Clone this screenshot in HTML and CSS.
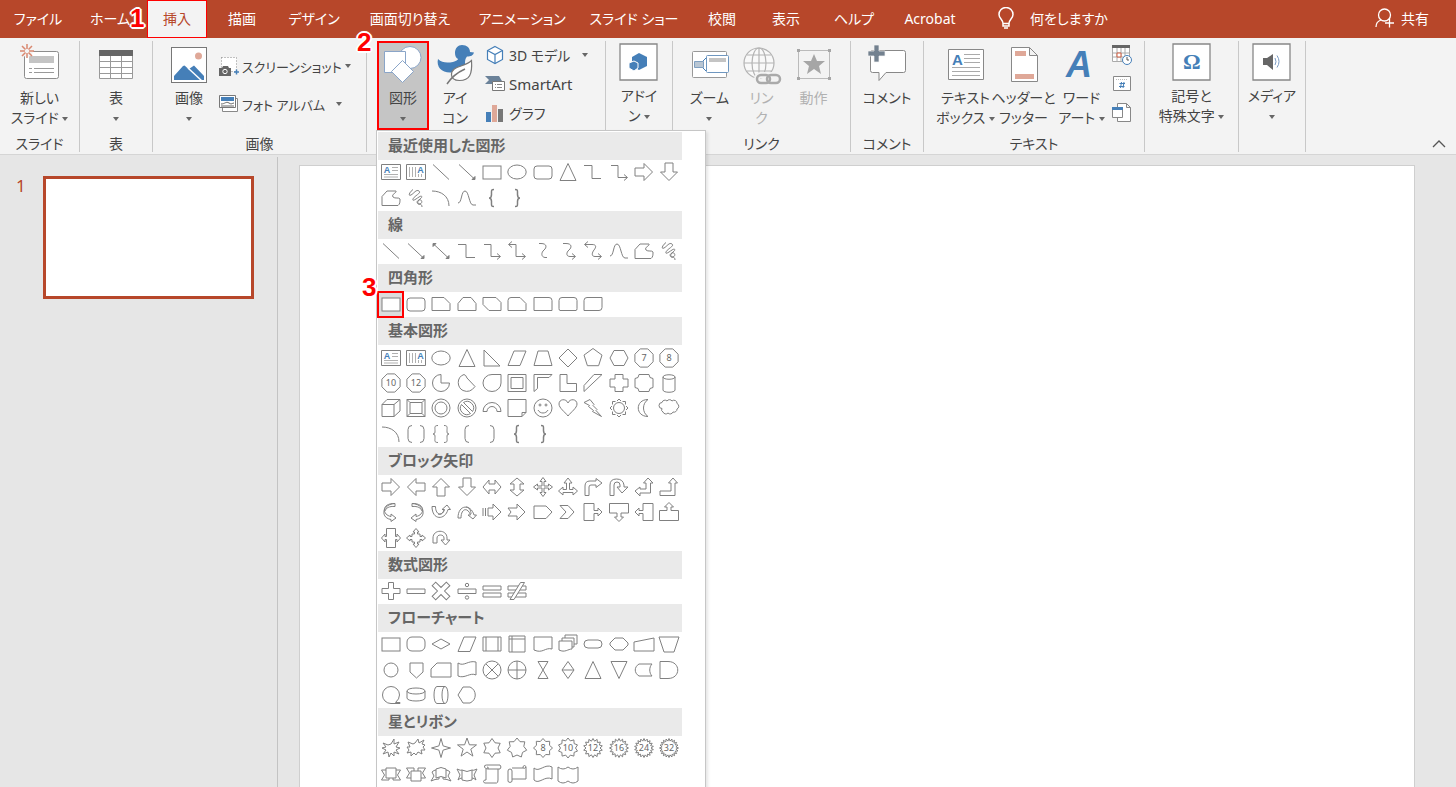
FILE: index.html
```html
<!DOCTYPE html>
<html lang="ja">
<head>
    <meta charset="UTF-8">
    <title>プレゼンテーション</title>
    <meta name="viewport" content="width=device-width, initial-scale=1.0">
    <link rel="stylesheet" href="styles.css">
</head>
<body>

<div class="app">
    <nav class="tabs">
        <button class="tab tab-m">ファイル</button>
        <button class="tab tab-m">ホーム</button>
        <button class="tab tab-s selected">挿入<span class="step step-1">1</span></button>
        <button class="tab tab-s">描画</button>
        <button class="tab tab-l">デザイン</button>
        <button class="tab tab-xl">画面切り替え</button>
        <button class="tab tab-xl">アニメーション</button>
        <button class="tab tab-xl">スライド ショー</button>
        <button class="tab tab-s">校閲</button>
        <button class="tab tab-s">表示</button>
        <button class="tab tab-m">ヘルプ</button>
        <button class="tab tab-l">Acrobat</button>
        <button class="tab tell-me">
            <svg width="16" height="22" viewBox="0 0 16 22" fill="none" stroke="#fff" stroke-width="1.5"><path d="M5 16.5c0-4-4-5-4-9a7 7 0 0 1 14 0c0 4-4 5-4 9zM5 16v3h6v-3M6 21h4"/></svg>
            何をしますか
        </button>
        <button class="tab share">
            <svg width="20" height="20" viewBox="0 0 20 20" fill="none" stroke="#fff" stroke-width="1.3"><circle cx="9.5" cy="7" r="6"/><path d="M1 19c0-4 2-6 5-7M10 15h9M14.5 10.5v9"/></svg>
            共有
        </button>
    </nav>

    <div class="ribbon">
        <!-- スライド -->
        <section class="group g-slide">
            <div class="items">
                <button class="big">
                    <svg class="icon" viewBox="0 0 40 42"><rect x="4.5" y="8.5" width="34" height="27" rx="2" fill="#fff" stroke="#8c8c8c"/><path fill="#c4c4c4" d="M9 13h25v7H9z"/><path stroke="#999" d="M9 25.5h3M14 25.5h20M9 29.5h3M14 29.5h20"/><circle cx="7" cy="8" r="6" fill="#f3f3f3"/><path stroke="#d98870" stroke-width="1.5" d="M7 1v5M7 10v5M0 8h5M9 8h5M2 3l3.5 3.5M8.5 9.5L12 13M12 3L8.5 6.5M5.5 9.5L2 13"/></svg>
                    <span>新しい<br>スライド <i class="caret"></i></span>
                </button>
            </div>
            <div class="group-label">スライド</div>
        </section>

        <!-- 表 -->
        <section class="group g-narrow">
            <div class="items">
                <button class="big">
                    <svg class="icon" viewBox="0 0 40 42"><path fill="#fff" stroke="#999" d="M3.5 8.5h33v27h-33zM14.5 8v27M25.5 8v27M3 18.5h33M3 24.5h33M3 30.5h33"/><path fill="#666" d="M3 7h34v6H3z"/></svg>
                    <span>表<br><i class="caret"></i></span>
                </button>
            </div>
            <div class="group-label">表</div>
        </section>

        <!-- 画像 -->
        <section class="group g-images">
            <div class="items start">
                <button class="big">
                    <svg class="icon" viewBox="0 0 40 42"><rect x="2.5" y="4.5" width="35" height="35" fill="#fff" stroke="#777"/><circle cx="29.5" cy="13" r="3.5" fill="#dfa898"/><path fill="#457fb8" d="M5 37v-4l9-10 1.5-.5L24 30l-4-4 5-3.5L35 33v4z"/><path stroke="#fff" stroke-width="1.5" d="M19 25l14 13"/></svg>
                    <span>画像<br><i class="caret"></i></span>
                </button>
                <div class="small-list two">
                    <button class="small">
                        <svg width="20" height="20" viewBox="0 0 20 20"><path fill="#fff" stroke="#888" stroke-dasharray="1 2" d="M2.5 1.5h15v14h-15z"/><path fill="#666" d="M0 12h3l1-2h5l1 2h2v8H0z"/><circle cx="6" cy="15.5" r="2.2" fill="#666" stroke="#fff"/><path stroke="#457fb8" stroke-width="1.5" d="M15 16h5M17.5 13.5v5"/></svg>
                        スクリーンショット <i class="caret"></i>
                    </button>
                    <button class="small">
                        <svg width="20" height="18" viewBox="0 0 20 18"><path fill="#fff" stroke="#888" d="M3.5 3.5h15v13h-15z"/><path fill="#fff" stroke="#777" d="M.5.5h16v12H.5z"/><path fill="#457fb8" d="M2 2h13v4H2z"/><path fill="none" stroke="#666" d="M2 9c4 0 5-3 8-1s3 0 5 0M2 11h13"/></svg>
                        フォト アルバム <i class="caret wide"></i>
                    </button>
                </div>
            </div>
            <div class="group-label">画像</div>
        </section>

        <!-- 図 -->
        <section class="group g-illust">
            <div class="items start">
                <div class="menu-wrap">
                    <button class="big pressed">
                        <svg class="icon" viewBox="0 0 40 42" fill="#fff" stroke="#8aa5c8"><circle cx="27" cy="14.5" r="11"/><path d="M1.5 8.5h21v21h-21z"/><path d="M19.5 17.5l11 11-11 11-11-11z"/></svg>
                        <span>図形<br><i class="caret"></i></span>
                    </button>
                    <span class="step step-2">2</span>
                    <div class="shape-menu" id="shapeMenu"></div>
                </div>
                <button class="big">
                    <svg class="icon" viewBox="0 0 40 42"><path fill="#457fb8" d="M20 10c0-5 3-8 7-8 5 0 8 3 8 7l4 .5c-1 3-3 4-7 4-2 2-2 5-2 7 0 5-5 9-14 9C7 30 1 24 3 16c4 4 9 4 15 3 3-1 5-2 5-3-2-1-3-3-3-6z"/><path fill="#fff" stroke="#777" stroke-width="1.2" d="M36.5 17.5c1 14-2 20-12 20-5 0-8-2-8-6 0-9 13-7 20-14z"/><path fill="none" stroke="#777" stroke-width="1.5" d="M12 41c4-6 9-11 18-15"/></svg>
                    <span>アイ<br>コン</span>
                </button>
                <div class="small-list">
                    <button class="small">
                        <svg width="20" height="20" viewBox="0 0 20 20" fill="#fff" stroke="#457fb8" stroke-width="1.2"><path d="M10 1.5l7.5 4v9L10 18.5l-7.5-4v-9z"/><path d="M2.5 5.5l7.5 4 7.5-4M10 9.5v9" fill="none"/></svg>
                        3D モデル <i class="caret wide"></i>
                    </button>
                    <button class="small latin">
                        <svg width="20" height="20" viewBox="0 0 20 20"><path fill="#6b8299" d="M0 2h14l3 5h-4v3H0l4-4z"/><path fill="#fff" stroke="#777" d="M7.5 7.5h12v9h-12z"/><path stroke="#888" d="M10 10.5h1M12 10.5h5M10 13.5h1M12 13.5h5"/></svg>
                        SmartArt
                    </button>
                    <button class="small">
                        <svg width="20" height="20" viewBox="0 0 20 20"><path fill="#457fb8" d="M1 9h5v10H1z"/><path fill="#dfa898" d="M7 2h5v17H7z"/><path fill="#777" d="M13 6h5v13h-5z"/></svg>
                        グラフ
                    </button>
                </div>
            </div>
        </section>

        <!-- アドイン -->
        <section class="group g-addin">
            <div class="items">
                <button class="big framed">
                    <svg class="icon" viewBox="0 0 40 42"><path fill="#fff" stroke="#888" stroke-width="1.3" d="M1 1h37v36H1z"/><path fill="#457fb8" d="M20 10l8 4v9l-8 4-7-4v-9z"/><path fill="#457fb8" stroke="#fff" d="M15 18l4 2v5l-4 3-5-3v-5z"/></svg>
                    <span>アドイ<br>ン <i class="caret"></i></span>
                </button>
            </div>
        </section>

        <!-- リンク -->
        <section class="group g-link">
            <div class="items">
                <button class="big">
                    <svg class="icon" viewBox="0 0 40 42"><rect x="2.5" y="8.5" width="34" height="26" rx="1" fill="#fff" stroke="#999"/><path fill="#b9c6d3" stroke="#7f9fc0" d="M4.5 18.5h9v6h-9z"/><path stroke="#457fb8" d="M13 18l3-3M13 25l3 3"/><rect x="16.5" y="12.5" width="22" height="17" rx="1" fill="#fff" stroke="#6f97c0"/><path fill="#c4c4c4" d="M19 15h17v4H19z"/></svg>
                    <span>ズーム<br><i class="caret"></i></span>
                </button>
                <button class="big" disabled>
                    <svg class="icon" viewBox="0 0 40 42" fill="none" stroke="#b3b3b3" stroke-width="1.2"><circle cx="17" cy="20" r="15" fill="#f9f9f9"/><ellipse cx="17" cy="20" rx="7" ry="15"/><path d="M17 5v30M2 20h30M5 12h24M5 28h24"/><g stroke="#f3f3f3" stroke-width="6"><rect x="15" y="32" width="13" height="8" rx="4"/><rect x="25" y="32" width="13" height="8" rx="4"/></g><g stroke="#aaa" stroke-width="2.5"><rect x="15" y="32" width="13" height="8" rx="4"/><rect x="25" y="32" width="13" height="8" rx="4"/></g></svg>
                    <span>リン<br>ク</span>
                </button>
                <button class="big" disabled>
                    <svg class="icon" viewBox="0 0 40 42"><path fill="none" stroke="#bbb" d="M4.5 7.5h31v28h-31z"/><path fill="#a6a6a6" d="M3 6h3v3H3zM34 6h3v3h-3zM3 34h3v3H3zM34 34h3v3h-3zM20 11l3 7h8l-6 5 2 8-7-5-7 5 2-8-6-5h8z"/></svg>
                    <span>動作</span>
                </button>
            </div>
            <div class="group-label">リンク</div>
        </section>

        <!-- コメント -->
        <section class="group g-narrow">
            <div class="items">
                <button class="big">
                    <svg class="icon" viewBox="0 0 40 42"><path fill="#fff" stroke="#888" d="M5.5 7.5h31q2 0 2 2v18q0 2-2 2H19l-7 8v-8H5.5q-2 0-2-2v-18q0-2 2-2z"/><path fill="#73818f" stroke="#f3f3f3" stroke-width=".7" d="M7 2h5v6h6v5h-6v6H7v-6H1V8h6z"/></svg>
                    <span>コメント</span>
                </button>
            </div>
            <div class="group-label">コメント</div>
        </section>

        <!-- テキスト -->
        <section class="group g-text">
            <div class="items">
                <button class="big wide">
                    <svg class="icon" viewBox="0 0 40 42"><path fill="#fff" stroke="#888" d="M2.5 6.5h35v30h-35z"/><path stroke="#aaa" d="M18 11.5h16M18 15.5h16M18 19.5h16M6 24.5h28M6 28.5h28M6 32.5h28"/><text class="glyph" x="6" y="22" font-size="15">A</text></svg>
                    <span>テキスト<br>ボックス <i class="caret"></i></span>
                </button>
                <button class="big wide">
                    <svg class="icon" viewBox="0 0 40 42"><path fill="#fff" stroke="#888" d="M7.5 4.5h18l8 8v26h-26zM25.5 4.5v8h8"/><path fill="#dfa898" d="M11 8h11v5H11zM11 31h19v5H11z"/></svg>
                    <span>ヘッダーと<br>フッター</span>
                </button>
                <button class="big wide">
                    <svg class="icon" viewBox="0 0 40 42"><text class="glyph slanted" x="4" y="34" font-size="36">A</text></svg>
                    <span>ワード<br>アート <i class="caret"></i></span>
                </button>
                <div class="small-list tight">
                    <button class="small" aria-label="日付と時刻">
                        <svg width="20" height="20" viewBox="0 0 20 20"><path fill="#fff" stroke="#aaa" d="M.5 2.5h17v14H.5zM5 2v14M9 2v14M13 2v14M1 8h16M1 12h16"/><path fill="#666" d="M0 0h18v3H0z"/><path fill="#fff" stroke="#cf5d40" d="M5 8h4v4H5z"/><circle cx="15" cy="15" r="4.5" fill="#fff" stroke="#457fb8"/><path fill="none" stroke="#555" d="M15 12v3h2"/></svg>
                    </button>
                    <button class="small" aria-label="スライド番号">
                        <svg width="20" height="20" viewBox="0 0 20 20"><path fill="#fff" stroke="#888" d="M1.5 2.5h17v14h-17z"/><path stroke="#bbb" stroke-dasharray="1 1" d="M4 5.5h12"/><path stroke="#457fb8" d="M9.5 8L8.5 14M12 8l-1 6M7.5 9.5h5.5M7 12.5h5.5"/></svg>
                    </button>
                    <button class="small" aria-label="オブジェクト">
                        <svg width="20" height="20" viewBox="0 0 20 20"><path fill="#fff" stroke="#888" d="M5.5.5h9l4 4v14h-13zM14.5.5v4h4"/><path fill="#fff" stroke="#888" d="M.5 5.5h10v9H.5z"/><path fill="#457fb8" d="M0 4h11v3H0z"/></svg>
                    </button>
                </div>
            </div>
            <div class="group-label">テキスト</div>
        </section>

        <!-- 記号と特殊文字 -->
        <section class="group g-symbol">
            <div class="items">
                <button class="big framed">
                    <svg class="icon" viewBox="0 0 40 42"><path fill="#fff" stroke="#888" stroke-width="1.3" d="M1 1h37v36H1z"/><text class="glyph serif" x="11" y="26" font-size="22">Ω</text></svg>
                    <span>記号と<br>特殊文字 <i class="caret"></i></span>
                </button>
            </div>
        </section>

        <!-- メディア -->
        <section class="group g-addin">
            <div class="items">
                <button class="big framed">
                    <svg class="icon" viewBox="0 0 40 42"><path fill="#fff" stroke="#888" stroke-width="1.3" d="M1 1h37v36H1z"/><path fill="#666" d="M11 15h4l6-4v16l-6-5h-4z"/><path fill="none" stroke="#7c9cc4" d="M23 15q2 4 0 7M25 12.5q4 6 0 12"/></svg>
                    <span>メディア<br><i class="caret"></i></span>
                </button>
            </div>
        </section>

        <button class="collapse" aria-label="リボンを折りたたむ">
            <svg width="14" height="8" viewBox="0 0 14 8" fill="none" stroke="#555" stroke-width="1.3"><path d="M1 7l6-6 6 6"/></svg>
        </button>
    </div>

    <main class="workspace">
        <aside class="thumbs">
            <span class="thumb-no">1</span>
            <div class="thumb"></div>
        </aside>
        <div class="slide"></div>
    </main>
</div>

<script src="shapes.js"></script>
</body>
</html>
```

FILE: styles.css
```css
* {
    box-sizing: border-box;
}
body {
    margin: 0;
    font-family: "Noto Sans", "Noto Sans CJK JP", sans-serif;
    font-feature-settings: "palt";
    font-size: 14px;
    color: #444;
    background: #e6e6e6;
}
button {
    margin: 0;
    padding: 0;
    border: none;
    background: none;
    font: inherit;
    font-feature-settings: inherit;
    color: inherit;
    white-space: nowrap;
}
.app {
    height: 100vh;
    display: flex;
    flex-direction: column;
    overflow: hidden;
}

/* tabs */
.tabs {
    display: flex;
    height: 38px;
    padding-left: 2px;
    background: #b7472a;
    color: #fff;
}
.tab {
    position: relative;
    padding-bottom: 2px;
}
.tab-s { width: 64px; }
.tab-m { width: 72px; }
.tab-l { width: 80px; }
.tab-xl { width: 112px; }
.tab.selected {
    width: 60px;
    margin: 0 3px 0 1px;
    background: #f3f3f3;
    color: #b7472a;
    border: 1px solid #f00;
}
.tell-me, .share {
    display: flex;
    align-items: center;
    gap: 16px;
    padding-left: 28px;
}
.share {
    gap: 6px;
    margin-left: auto;
    padding-right: 27px;
}

/* numbered steps */
.step {
    position: absolute;
    z-index: 5;
    color: #f00;
    font: bold 26px/26px "Liberation Sans", sans-serif;
    text-shadow: 2px 0 #fff, -2px 0 #fff, 0 2px #fff, 0 -2px #fff, 1px 1px #fff, -1px -1px #fff, 1px -1px #fff, -1px 1px #fff, 0 0 3px #fff;
}
.step-1 { left: -18px; top: 4px; }
.step-2 { left: -20px; top: -12px; }
.step-3 { left: -16px; top: -18px; }

/* ribbon */
.ribbon {
    display: flex;
    height: 117px;
    padding: 3px 0 2px;
    background: #f3f3f3;
    border-bottom: 1px solid #d5d5d5;
}
.group {
    display: flex;
    flex-direction: column;
    flex-shrink: 0;
    border-right: 1px solid #c8c8c8;
}
.g-slide { width: 80px; }
.g-narrow { width: 73px; }
.g-images { width: 214px; }
.g-illust { width: 239px; }
.g-addin { width: 67px; }
.g-link { width: 178px; }
.g-text { width: 221px; }
.g-symbol { width: 94px; }
.items {
    flex: 1;
    display: flex;
    justify-content: center;
}
.items.start {
    justify-content: flex-start;
    padding-left: 10px;
}
.group-label {
    height: 16px;
    line-height: 16px;
    text-align: center;
}
.big {
    display: flex;
    flex-direction: column;
    align-items: center;
    width: 52px;
    height: 89px;
    padding-top: 2px;
    line-height: 20px;
}
.big.wide {
    width: 58px;
}
.big:disabled {
    color: #b1b1b1;
}
.big.pressed {
    background: #c5c5c5;
    outline: 2px solid #f00;
    outline-offset: -2px;
}
.icon {
    flex-shrink: 0;
    width: 40px;
    height: 42px;
    margin-bottom: 3px;
}
.framed .icon {
    margin-bottom: 1px;
}
.caret {
    display: inline-block;
    vertical-align: middle;
    border: 3px solid transparent;
    border-top: 4px solid #666;
    border-bottom: none;
}
.caret.wide {
    margin-left: 8px;
}
.glyph {
    fill: #457fb8;
    font-family: "Liberation Sans", sans-serif;
    font-weight: bold;
}
.slanted { font-style: italic; }
.serif { font-family: "Liberation Serif", serif; }
.small-list {
    display: flex;
    flex-direction: column;
    padding-left: 4px;
}
.small-list.tight {
    padding-left: 1px;
}
.small-list.two {
    padding: 7px 0 0 4px;
    font-size: 13px;
}
.small {
    display: flex;
    align-items: center;
    gap: 4px;
    height: 29px;
    padding-bottom: 2px;
}
.small.latin {
    font-size: 15px;
}
.two .small {
    gap: 3px;
    height: 38px;
}
.collapse {
    align-self: flex-end;
    margin-left: auto;
    padding-right: 10px;
}

/* shapes menu */
.menu-wrap {
    position: relative;
}
.shape-menu {
    position: absolute;
    z-index: 4;
    top: 89px;
    left: -1px;
    width: 330px;
    padding: 1px 23px 40px 1px;
    background: #fff;
    border: 1px solid #c6c6c6;
    box-shadow: 2px 2px 3px rgba(0, 0, 0, 0.1);
}
.shape-menu h3 {
    height: 28px;
    margin: 0;
    padding-left: 10px;
    background: #eaeaea;
    color: #666;
    font-size: 15px;
    line-height: 26px;
}
.shape-grid {
    display: grid;
    grid-template-columns: repeat(12, 1fr);
}
.shape {
    position: relative;
    display: flex;
    align-items: center;
    justify-content: center;
    aspect-ratio: 1;
    padding-bottom: 1px;
}
.shape svg {
    width: 20px;
    height: 20px;
    fill: none;
    stroke: #808080;
    overflow: visible;
}
.shape text {
    fill: #666;
    stroke: none;
    font-size: 9px;
    text-anchor: middle;
}
.shape .mark {
    fill: #457fb8;
    font-family: "Liberation Sans", sans-serif;
    font-weight: bold;
}
.shape .solid {
    fill: #808080;
}
.shape .pale {
    stroke: #b0b0b0;
}
.shape.active {
    background: #dcdcdc;
    outline: 2px solid #f00;
    outline-offset: -1px;
}
.shape.active rect {
    fill: #fff;
}

/* workspace */
.workspace {
    flex: 1;
    display: flex;
    padding-top: 2px;
}
.thumbs {
    display: flex;
    align-items: flex-start;
    gap: 17px;
    width: 278px;
    padding: 19px 23px 0 16px;
    border-right: 1px solid #c3c3c3;
}
.thumb-no {
    color: #b7472a;
    font-size: 17px;
    line-height: 20px;
}
.thumb {
    flex: 1;
    aspect-ratio: 12 / 7;
    background: #fff;
    border: 3px solid #b7472a;
}
.slide {
    flex: 1;
    margin: 8px 41px 0 21px;
    background: #fff;
    border: 1px solid #cfcfcf;
    border-bottom: none;
}
```

FILE: shapes.js
```javascript
const p = d => `<path d="${d}"/>`;
const turn = (deg, s) => `<g transform="rotate(${deg} 10 10)">${s}</g>`;
const flip = s => `<g transform="matrix(-1 0 0 1 20 0)">${s}</g>`;
const label = t => `<text x="10" y="13">${t}</text>`;

// closed polygon with n corners, every second one pulled in to r when given
function star(n, R, r, start = -90) {
    const pts = [];
    const count = r ? n * 2 : n;
    for (let i = 0; i < count; i++) {
        const a = (start + i * 360 / count) * Math.PI / 180;
        const d = r && i % 2 ? r : R;
        pts.push((10 + d * Math.cos(a)).toFixed(1) + ',' + (10 + d * Math.sin(a)).toFixed(1));
    }
    return `<polygon points="${pts.join(' ')}"/>`;
}

const rightArrow = p('M1 6h9V1.5l8.5 8.5-8.5 8.5V14H1z');
const circle = (r, x = 10, y = 10) => `<circle cx="${x}" cy="${y}" r="${r}"/>`;
const elbow = 'M2 3.5h7v12h9';
const head = p('M15 12.5l3.5 3-3.5 3');
const tail = p('M5 .5l-3.5 3L5 6.5');
const braceL = 'M12 1.5c-3 0-2.5 1-2.5 5 0 2-.5 3.5-2.5 3.5 2 0 2.5 1.5 2.5 3.5 0 4-.5 5 2.5 5';
const brace = `<path stroke-width="1.5" d="${braceL}"/>`;
const octagon = star(8, 9.8, 0, 22.5);
const leftRight = p('M1 10l6-7v4h6V3l6 7-6 7v-4H7v4z');
const callout = p('M1 1.5h10v7h4V6l4 4-4 4v-2.5h-4v7H1z');
const curveRight = p('M14 1.5C0 1 1 13 10 14.5V12l5 4-5 3.5v-2C-1 16 1 2 14 1.5zv3C8 4 5 6 4 9');

const shapes = {
    textbox: p('M.5 2.5h19v15H.5z') + '<path class="pale" d="M11 5.5h6M11 8.5h6M3 12.5h14M3 15h14"/><text class="mark" x="6" y="11">A</text>',
    vtextbox: p('M.5 2.5h19v15H.5z') + '<path class="pale" d="M3.5 5v10M6.5 5v10M9.5 5v10M12.5 12v3M15.5 12v3"/><text class="mark" x="14.5" y="11">A</text>',
    line: p('M2 2.5l16 15'),
    lineArrow: p('M2 2.5l16 15') + '<path class="solid" d="M18 17.5v-3l-3 3z"/>',
    lineArrow2: p('M2 2.5l16 15') + '<path class="solid" d="M18 17.5v-3l-3 3zM2 2.5v3l3-3z"/>',
    rect: '<rect x="1" y="4" width="18" height="13"/>',
    ellipse: '<ellipse cx="10" cy="10" rx="9.2" ry="7"/>',
    roundRect: '<rect x="1" y="4" width="18" height="13" rx="3"/>',
    triangle: p('M10 1.5L18 18.5H2z'),
    elbow: p('M1 3.5h8v13h9'),
    elbowArrow: p(elbow) + head,
    elbowArrow2: p(elbow) + head + tail,
    right: rightArrow,
    down: turn(90, rightArrow),
    left: turn(180, rightArrow),
    up: turn(270, rightArrow),
    freeform: p('M1 17.5V8.5l5-5.5h9c1 2-5 3-3 6 2 2 6 0 7 2 0 3 0 5-2 6.5z'),
    scribble: p('M7 1.5c-4 3-5 7-2 5.5s5-6 8-4-5 5-6 8 3 0 6-2 4 0 1 2-3 6 0 5 2-5-1-4-2 4 0 4 3 1 3 3'),
    arc: p('M1 3c9 0 17 5 17 15'),
    curve: p('M1 15C5 15 4 3 8 3s4 14 8 14h3'),
    braceL: brace,
    braceR: flip(brace),
    sCurve: p('M6 2.5h2c6 0 6 4 3 6.5s-3 7 1 7.5h2'),
    sArrow: p('M5 2.5h3c6 0 6 4 3 6.5s-3 6.500 1 6.500h5') + p('M14 12.5l3.5 3-3.5 3'),
    sArrow2: p('M2 3.5h7c5 0 4 3 2 5.5s-3 6.500 1 6.500h6') + head + tail,
    snip1: p('M1 3.5h12l6 6v7H1z'),
    snip2: p('M1 16.5v-7l5-6h8l5 6v7z'),
    snipDiag: p('M1 3.5h13l5 5v8H7l-6-6z'),
    snipRound: p('M1 16.5v-10q0-3 3-3h9l6 6v7z'),
    round1: p('M1 3.5h15q3 0 3 3v10H1z'),
    round2: p('M1 14.5v-8q0-3 3-3h12q3 0 3 3v8q0 2-1 2H2q-1 0-1-2z'),
    roundDiag: p('M4 3.5h15v10q0 3-3 3H1v-10q0-3 3-3z'),

    rightTriangle: p('M2 2v16h16z'),
    parallelogram: p('M1 17.5L7 3h12l-6 14.5z'),
    trapezoid: p('M1 17.5L5 3h10l4 14.5z'),
    diamond: p('M10 1l9 9-9 9-9-9z'),
    pentagon: star(5, 9.5),
    hexagon: p('M1 10l4-7.5h10l4 7.5-4 7.5H5z'),
    n7: octagon + label('7'),
    n8: octagon + label('8'),
    n10: octagon + label('10'),
    n12: octagon + label('12'),
    pie: p('M10 1.5a8.5 8.5 0 1 0 8.5 8.5H10z'),
    chord: p('M7 1.5C-1 4 0 15 6 17.500q7 3 12-4L10 5Q9 2 7 1.500z'),
    teardrop: p('M10 1.5h9V10a9 8.5 0 1 1-9-8.5z'),
    frame: p('M1 1.5h18v17H1zM4 4.5h12v11H4z'),
    halfFrame: p('M1 1.5h18l-3 3H4.5v11L1 18.5z'),
    lShape: p('M2 1.5h7v9h9.5v8H2z'),
    stripe: p('M1 18.5v-6L11 1.5h8z'),
    cross: p('M6 1.5h8V6h5v8h-5v4.5H6V14H1V6h5z'),
    plaque: p('M5 1.5h10q0 4 4 4v9q-4 0-4 4H5q0-4-4-4v-9q4 0 4-4z'),
    can: p('M4 4c0-3 12-3 12 0v13c0 3-12 3-12 0zM4 4c0 3 12 3 12 0'),
    cube: p('M1 6.5h12v12H1zM1 6.5l5-5h13l-6 5M19 1.5V13l-6 5.5'),
    bevel: p('M1 1.5h18v17H1zM4 4.5h12v11H4zM1 1.5l3 3M19 1.5l-3 3M1 18.5l3-3M19 18.5l-3-3'),
    donut: circle(9) + circle(6),
    noSign: circle(9) + p('M4.5 6.5a6.5 6.5 0 0 0 9 9zM6.5 4.5a6.5 6.5 0 0 1 9 9z'),
    blockArc: p('M1 13.5a9 9 0 0 1 18 0h-4a5 5 0 0 0-10 0z'),
    fold: p('M1 1.5h18v13l-4 4H1zM19 14.5h-4v4'),
    smiley: circle(9) + circle(1, 7, 7) + circle(1, 13, 7) + p('M5 12c2 4 8 4 10 0'),
    heart: p('M10 18C7 14 1 10 1 6c0-5 7-6 9-1 2-5 9-4 9 1 0 4-6 8-9 12z'),
    bolt: p('M1 4.5l6-3 4 5-1 1 4 4-1 1 5.5 6-9-5 1-1-5-4 1-1z'),
    sun: circle(5.5) + p('M8 3l2-2 2 2M8 17l2 2 2-2M3 8l-2 2 2 2M17 8l2 2-2 2M3.5 6.5v-3h3M13.5 3.5h3v3M3.5 13.5v3h3M13.5 16.5h3v-3'),
    moon: p('M14 1.5c-13 0-13 17 0 17-6-4-6-13 0-17z'),
    cloud: p('M3 10.500a3 3 0 0 1 0-6 3 3 0 0 1 5-1.500 3 3 0 0 1 5 0 3 3 0 0 1 5 2.500 3 3 0 0 1 0 5.500 3 3 0 0 1-4 3 3 3 0 0 1-5 1 3 3 0 0 1-5-1 2.500 2.500 0 0 1-1-3.500z'),
    bracketPair: p('M6 1.5q-4 0-4 4v9q0 4 4 4M14 1.5q4 0 4 4v9q0 4-4 4'),
    bracePair: p('M7 1.5c-4 0-3 2-3 5 0 2 0 3.5-2 3.5 2 0 2 1.5 2 3.5 0 3-1 5 3 5M13 1.5c4 0 3 2 3 5 0 2 0 3.5 2 3.5-2 0-2 1.5-2 3.5 0 3 1 5-3 5'),
    bracketL: p('M12 1.5q-4 0-4 4v9q0 4 4 4'),
    bracketR: p('M8 1.5q4 0 4 4v9q0 4-4 4'),

    leftRight: leftRight,
    upDown: turn(90, leftRight),
    quad: p('M10 .5l3 4h-2V9h4.500V7l4 3-4 3v-2H11v4.500h2l-3 4-3-4h2V11H4.500v2l-4-3 4-3v2H9V4.500H7z'),
    triArrow: p('M10 1l4 5h-2.5v6.5H15V10l4.5 4-4.5 4v-2.5H5V18L.5 14 5 10v2.5h3.5V6H6z'),
    bent: p('M2 18.5V9q0-5 5-5h6V1.5L19 6l-6 4.5V8H8Q6 8 6 10v8.5z'),
    uTurn: p('M1 18.5V8q0-6 6.5-6T15 8v2h4l-6 6-5-6h3V8q0-3-3-3T5 8v10.5z'),
    leftUp: p('M1 14l5-4v2h6V6H9.5L14 1l5 5h-2.5v10H6v3z'),
    bentUp: p('M1 14h11V6H9.5L14 1l4.5 5H16v12.5H1z'),
    curveRight: curveRight,
    curveLeft: flip(curveRight),
    curveUp: p('M1 4.5c0 14 13 14 16 3h2.5L16 3l-5 4.5h2.5c-2 7-9 6-9-3zM7 12c3 1 5-1 6-4'),
    curveDown: p('M1 16c0-14 13-14 16-3h2.5L16 17l-5-4h2.5C11 5 4 6 4 16zM9 5c3 0 5 3 5 7'),
    striped: p('M1 6v8M3.5 6v8M6 6h5V2l8 8-8 8v-4H6z'),
    notched: p('M1 6h9V2l8 8-8 8v-4H1l3-4z'),
    pentArrow: p('M1 4h12l6 6-6 6.5H1z'),
    chevron: p('M2 3.5h8l6 6.5-6 6.5H2L8 10z'),
    callRight: callout,
    callDown: p('M.5 1.500h19v9.500H12v4h2.500L10 19.500 5.500 15H8v-4H.5z'),
    callLeft: turn(180, callout),
    callUp: p('M.5 18.5v-10H8V5H5.5L10 .5 14.5 5H12v3.5h7.5v10z'),
    callLR: p('M5.5 .5h9v8H16V6l3.5 4-3.5 4v-2.5h-1.5v8h-9v-8H4V14L.5 10 4 6v2.5h1.5z'),
    callQuad: p('M10 .5l3 3.5h-1.5v2H14v2.5h2V7l3.5 3-3.5 3v-1.5h-2V14h-2.5v2H13l-3 3.5L7 16h1.5v-2H6v-2.5H4V13L.5 10 4 7v1.5h2V6h2.5V4H7z'),
    circular: p('M2 15v-5c0-9 14-9 14 0v2h3l-4.5 5-4.5-5h3v-2c0-4-7-4-7 0v5z'),

    plus: p('M7.5 1.5h5v6h6.5v5h-6.5v6h-5v-6H1v-5h6.5z'),
    minus: p('M1 8h18v4.5H1z'),
    times: turn(45, p('M7.5 0h5v7.5H20v5h-7.5V20h-5v-7.5H0v-5h7.5z')),
    divide: p('M1 8h18v4.5H1z') + circle(1.7, 10, 4) + circle(1.7, 10, 16.5),
    equal: p('M1 5h18v4H1zM1 12h18v4H1z'),
    notEqual: p('M1 5h18v4H1zM1 12h18v4H1z') + '<path fill="#fff" d="M3 18.5L13.5 1.5h4L7 18.5z"/>',

    fAlt: '<rect x="1" y="3" width="18" height="14" rx="5"/>',
    decision: p('M1 10l9-5 9 5-9 5z'),
    predefined: p('M1 3h18v14H1zM4 3v14M16 3v14'),
    internal: p('M2 2h16v16H2zM5 2v16M2 5h16'),
    doc: p('M1 3h18v12c-7-2-9 5-18 1z'),
    multiDoc: p('M1 7h13v8c-4 0-7 4-13 1zM4 7V4h12v9h-2M7 4V1h12v9h-3'),
    terminator: '<rect x="1" y="6" width="18" height="8" rx="4"/>',
    prep: p('M6 4h8l5 5v2l-5 5H6l-5-5V9z'),
    manualIn: p('M0 8l20-4v13H0z'),
    manualOp: p('M0 3h20l-5 15H5z'),
    connector: circle(7),
    offpage: p('M4 3h13v9l-6.5 6L4 12z'),
    card: p('M6 3h14v14H0V9z'),
    tape: p('M1 3c6 4 10-3 18-1v13c-6-3-11 4-18 1z'),
    sumJunction: circle(9) + p('M4 4l12 12M16 4L4 16'),
    or: circle(9) + p('M10 1v18M1 10h18'),
    collate: p('M5 1.5h10l-10 17h10z'),
    sort: p('M10 1.5l6 8.5-6 8.5L4 10zM4 10h12'),
    merge: p('M2 1.5h16l-8 17z'),
    stored: p('M5 4h13c-3 3-3 9 0 12H5C0 13 0 7 5 4z'),
    delay: p('M1 1.5h8c13 0 13 17 0 17H1z'),
    sequential: p('M19 18.5h-9a8.5 8.5 0 1 1 8.5-8.5q0 4-4 7.500H19z'),
    disk: p('M1 6c0-4 18-4 18 0v7c0 4-18 4-18 0zM1 6c0 4 18 4 18 0'),
    direct: p('M6 1.5h8c4 0 4 17 0 17H6c-4 0-4-17 0-17zM14 1.5c-4 0-4 17 0 17'),
    display: p('M1 10l5-8h7c7 3 7 13 0 16H6z'),

    burst1: p('M10 6l3-5 0 5 5-2-3 5 4 1-4 2 3 4-5-2 0 4-3-3-2 4-1-5-5 2 3-4-4-2 4-1-3-4 5 2z'),
    burst2: p('M9 5l3-4 1 4 5-3-2 4 3 1-2 2 2 3-4 0 1 4-4-2-2 3-2-2-3 3 0-4-4 1 2-3-2-3 3 0-2-5 5 2z'),
    star4: star(4, 9.5, 3),
    star5: star(5, 10, 4),
    star6: star(6, 9.5, 6),
    star7: star(7, 10, 7),
    s8: star(8, 9.5, 7) + label('8'),
    s10: star(10, 10, 7.5) + label('10'),
    s12: star(14, 9.5, 7) + label('12'),
    s16: star(16, 9.5, 7) + label('16'),
    s24: star(18, 9.5, 7) + label('24'),
    s32: star(20, 9.5, 7) + label('32'),
    ribbonUp: p('M5 4h10v10H5zM5 6H.5l3 5-3 5H8v-2M15 6h4.5l-3 5 3 5H12v-2'),
    ribbonDown: p('M5 7h10v10H5zM5 14H.5l3-5-3-5H8v3M15 14h4.5l-3-5 3-5H12v3'),
    curveRibbonUp: p('M5 5q5-3 10 0v9q-5-3-10 0zM5 6q-2 0-4 2l2 4-3 5q4-2 8-2v-2M15 6q2 0 4 2l-2 4 3 5q-4-2-8-2v-2'),
    curveRibbonDown: p('M5 6q5 3 10 0v10q-5 2-10 0zM5 14q-2 0-4 2l2-5-3-6q4 2 5 1M15 14q2 0 4 2l-2-5 3-6q-4 2-5 1'),
    vScroll: p('M4 5v11H2.5q-2 1.5 0 3h12q1.5 0 1.5-3V5h2q2-2 0-4H4.5Q2 1 2.5 3T6 5h10M6 5q1-2-1-2'),
    hScroll: p('M5 4h11V2.5q1.5-2 3 0V15H5v2.5q-2 2-4 0V7q0-2 2-2t2 2v8M16 4q2 1 3-1'),
    wave: p('M1 4c5 5 11-5 18-1v12c-7-4-13 6-18 1z'),
    doubleWave: p('M0 3q5 4 10 0 5 4 10 0v14q-5 4-10 0-5 4-10 0z')
};

const sections = [
    ['最近使用した図形', 'textbox vtextbox line lineArrow rect ellipse roundRect triangle elbow elbowArrow right down freeform scribble arc curve braceL braceR'],
    ['線', 'line lineArrow lineArrow2 elbow elbowArrow elbowArrow2 sCurve sArrow sArrow2 curve freeform scribble'],
    ['四角形', 'rect roundRect snip1 snip2 snipDiag snipRound round1 round2 roundDiag'],
    ['基本図形', 'textbox vtextbox ellipse triangle rightTriangle parallelogram trapezoid diamond pentagon hexagon n7 n8 n10 n12 pie chord teardrop frame halfFrame lShape stripe cross plaque can cube bevel donut noSign blockArc fold smiley heart bolt sun moon cloud arc bracketPair bracePair bracketL bracketR braceL braceR'],
    ['ブロック矢印', 'right left up down leftRight upDown quad triArrow bent uTurn leftUp bentUp curveRight curveLeft curveUp curveDown striped notched pentArrow chevron callRight callDown callLeft callUp callLR callQuad circular'],
    ['数式図形', 'plus minus times divide equal notEqual'],
    ['フローチャート', 'rect fAlt decision parallelogram predefined internal doc multiDoc terminator prep manualIn manualOp connector offpage card tape sumJunction or collate sort triangle merge stored delay sequential disk direct display'],
    ['星とリボン', 'burst1 burst2 star4 star5 star6 star7 s8 s10 s12 s16 s24 s32 ribbonUp ribbonDown curveRibbonUp curveRibbonDown vScroll hScroll wave doubleWave']
];

const menu = document.getElementById('shapeMenu');
let html = '';
sections.forEach(([title, names]) => {
    html += `<h3>${title}</h3><div class="shape-grid">`;
    names.split(' ').forEach((name, i) => {
        const active = title === '四角形' && i === 0;
        html += `<button class="shape${active ? ' active' : ''}" aria-label="${name}">`;
        html += `<svg viewBox="0 0 20 20">${shapes[name]}</svg>`;
        html += active ? '<span class="step step-3">3</span>' : '';
        html += '</button>';
    });
    html += '</div>';
});
menu.innerHTML = html;
```
